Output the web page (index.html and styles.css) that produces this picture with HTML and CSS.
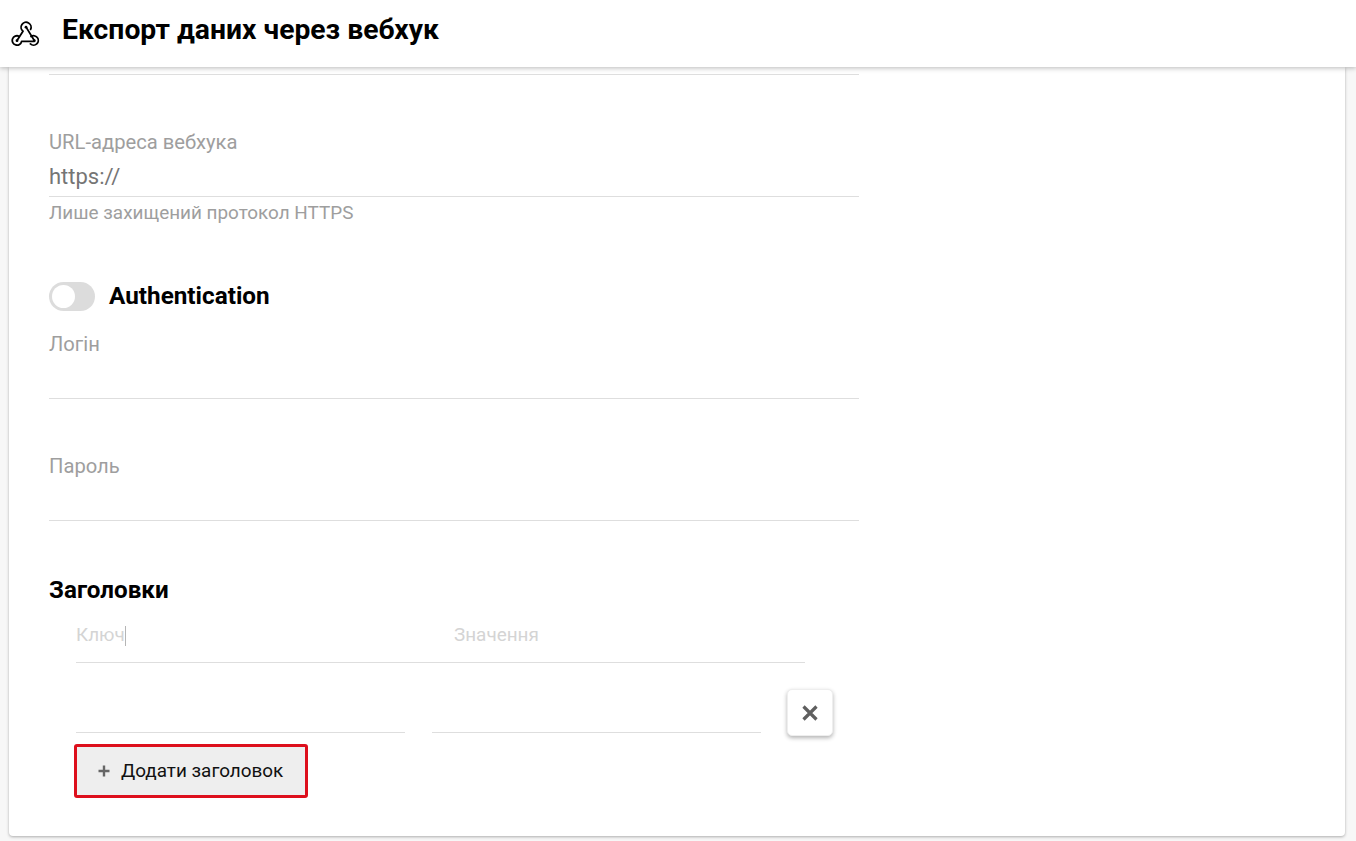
FILE: index.html
```html
<!DOCTYPE html>
<html lang="uk">
<head>
<meta charset="utf-8">
<title>Експорт даних через вебхук</title>
<link rel="stylesheet" href="styles.css">
</head>
<body>
<header class="topbar">
  <svg class="logo" viewBox="0 0 30 30" width="30" height="30" fill="none" stroke="#000" stroke-width="1.8" stroke-linecap="round" stroke-linejoin="round">
    <path d="M19.6 10.4A5 5 0 1 0 12 12.2L6 21.5"/>
    <path d="M8 17.2A4.7 4.7 0 1 0 10.6 22.3H23.3"/>
    <path d="M15.4 8.6 23.3 21.5"/>
    <path d="M20 17.5A4.7 4.7 0 1 1 19.4 24.9"/>
    <circle cx="15" cy="8.2" r="1.4" fill="#000" stroke="none"/>
    <circle cx="6" cy="21.7" r="1.4" fill="#000" stroke="none"/>
    <circle cx="23.3" cy="21.7" r="1.4" fill="#000" stroke="none"/>
  </svg>
  <h1 class="title">Експорт даних через вебхук</h1>
</header>
<main class="page">
  <section class="card">
    <div class="form">
      <div class="rule-top"></div>
      <div class="field field-url">
        <div class="label">URL-адреса вебхука</div>
        <div class="value">https://</div>
        <div class="hint">Лише захищений протокол HTTPS</div>
      </div>
      <div class="auth">
        <span class="toggle"><span class="knob"></span></span>
        <span class="auth-text">Authentication</span>
      </div>
      <div class="field field-login">
        <div class="label">Логін</div>
      </div>
      <div class="field field-pass">
        <div class="label">Пароль</div>
      </div>
      <h2 class="section-title">Заголовки</h2>
      <div class="headers">
        <div class="head-row">
          <span class="ph ph-key">Ключ<i class="caret"></i></span>
          <span class="ph">Значення</span>
        </div>
        <div class="pair">
          <div class="pair-input"></div>
          <div class="pair-input"></div>
          <button class="remove" type="button" aria-label="Видалити">
            <svg viewBox="0 0 16 16" width="16" height="16" stroke="#5f5f5f" stroke-width="3.2"><path d="M1.5 1.5l13 13M14.5 1.5l-13 13"/></svg>
          </button>
        </div>
        <button class="add" type="button">
          <svg viewBox="0 0 12 12" width="12" height="12" stroke="#666" stroke-width="2.4"><path d="M6 .5v11M.5 6h11"/></svg>
          <span>Додати заголовок</span>
        </button>
      </div>
    </div>
  </section>
</main>
</body>
</html>
```
FILE: styles.css
```css
* { box-sizing: border-box; }
html, body { margin: 0; height: 841px; overflow: hidden; }
body { background: #f7f7f7; font-family: Roboto, "Noto Sans", sans-serif; color: #000; position: relative; }
.topbar {
  height: 67px; background: #fff; display: flex; align-items: center;
  padding-left: 11px; box-shadow: 0 1px 5px rgba(0,0,0,.28); position: relative; z-index: 2;
}
.logo { flex: none; }
.title { margin: 0 0 0 21px; font-size: 28.3px; line-height: 30px; font-weight: 700; position: relative; top: -4px; }
.page { padding: 0 11px 0 9px; }
.card {
  height: 769px; background: #fff; border-radius: 0 0 4px 4px;
  box-shadow: 0 1px 3px rgba(0,0,0,.3); padding: 7px 0 0 40px;
}
.form { width: 810px; }
.rule-top { height: 1px; background: #dedede; }
.label { font-size: 20.2px; line-height: 22px; color: #9e9e9e; }
.value { font-size: 22px; line-height: 30px; color: #757575; height: 35px; border-bottom: 1px solid #dedede; margin-top: 9px; }
.hint { font-size: 18.9px; line-height: 20px; color: #9e9e9e; margin-top: 6px; }
.field-url { padding-top: 56px; }
.auth { display: flex; align-items: center; height: 30px; margin-top: 58px; }
.toggle { width: 46px; height: 29px; border-radius: 15px; background: #dcdcdc; display: block; position: relative; flex: none; }
.knob { position: absolute; left: 3px; top: 3px; width: 23px; height: 23px; border-radius: 50%; background: #fff; }
.auth-text { margin-left: 14px; font-size: 24.3px; line-height: 30px; font-weight: 700; }
.field-login, .field-pass { height: 66px; border-bottom: 1px solid #dedede; }
.field-login { margin-top: 22px; }
.field-pass { margin-top: 56px; }
.section-title { margin: 56px 0 0; font-size: 24.2px; line-height: 26px; font-weight: 700; }
.headers { padding-left: 25px; width: 790px; }
.head-row { margin-top: 19px; margin-left: 2px; width: 729px; height: 41px; border-bottom: 1px solid #dedede; display: flex; }
.ph { font-size: 18.9px; line-height: 26px; color: #d4d4d4; position: relative; }
.ph-key { width: 378px; }
.caret { display: inline-block; width: 1px; height: 20px; background: #b5b5b5; vertical-align: -5px; }
.pair { display: flex; align-items: flex-end; margin-top: 27px; height: 47px; padding-left: 2px; }
.pair-input { width: 329px; height: 43px; border-bottom: 1px solid #dedede; margin-right: 27px; margin-bottom: 4px; }
.remove {
  width: 46px; height: 47px; margin: 0 0 1px -1px; padding: 0; display: flex; align-items: center; justify-content: center;
  background: #fff; border: 1px solid #eee; border-radius: 5px; box-shadow: 0 2px 4px rgba(0,0,0,.3);
}
.add {
  display: flex; align-items: center; width: 234px; height: 54px; margin-top: 7px; padding: 0 0 0 21px;
  background: #eeeeee; border: 3px solid #dd0f1c; border-radius: 3px; font: 400 18.9px/24px Roboto, sans-serif; color: #111;
}
.add span { margin-left: 11px; }
```
